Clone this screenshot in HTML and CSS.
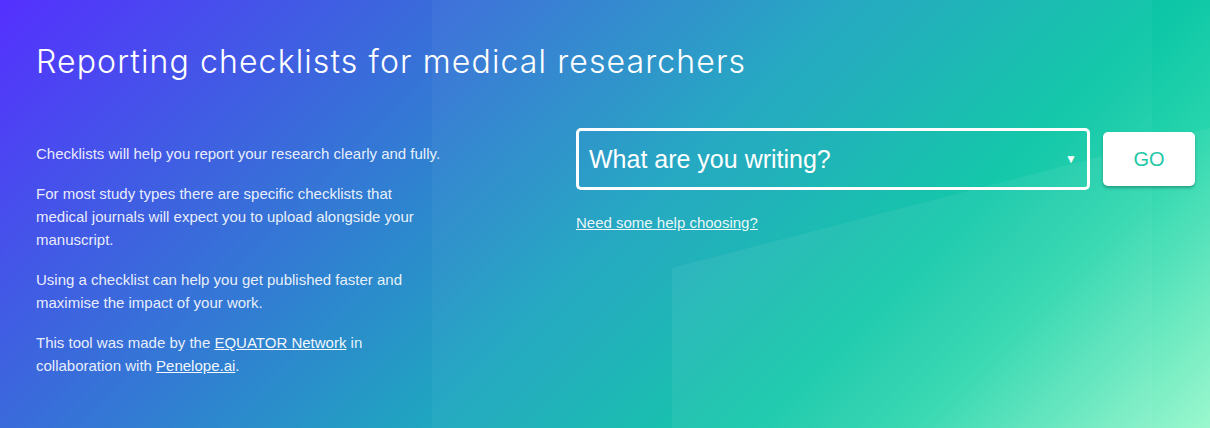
FILE: index.html
```html
<!DOCTYPE html>
<html lang="en">
<head>
<meta charset="utf-8">
<title>Reporting checklists for medical researchers</title>
<link rel="stylesheet" href="styles.css">
</head>
<body>
<section class="hero">
  <svg class="hero-shapes" width="1210" height="428" viewBox="0 0 1210 428" aria-hidden="true">
    <rect x="432" y="0" width="720" height="428" fill="#ffffff" fill-opacity="0.035"/>
    <polygon points="672,268 1210,128 1210,428 672,428" fill="#ffffff" fill-opacity="0.06"/>
  </svg>
  <div class="hero-inner">
    <h1 class="hero-title">Reporting checklists for medical researchers</h1>
    <div class="hero-body">
      <div class="intro">
        <p>Checklists will help you report your research clearly and fully.</p>
        <p>For most study types there are specific checklists that medical journals will expect you to upload alongside your manuscript.</p>
        <p>Using a checklist can help you get published faster and maximise the impact of your work.</p>
        <p>This tool was made by the <a href="#">EQUATOR Network</a> in collaboration with <a href="#">Penelope.ai</a>.</p>
      </div>
      <div class="picker">
        <div class="picker-row">
          <div class="select">
            <span class="select-label">What are you writing?</span>
            <span class="select-arrow">&#9660;</span>
          </div>
          <button class="go-btn" type="button">GO</button>
        </div>
        <a class="help-link" href="#">Need some help choosing?</a>
      </div>
    </div>
  </div>
</section>
</body>
</html>
```
FILE: styles.css
```css
* { box-sizing: border-box; }
html, body { margin: 0; padding: 0; }
body {
  width: 1210px;
  height: 428px;
  overflow: hidden;
  font-family: "Liberation Sans", Arial, sans-serif;
}
.hero {
  position: relative;
  width: 1210px;
  height: 428px;
  overflow: hidden;
  background: linear-gradient(135deg, #5530ff 0%, #3a6adb 26%, #1fa6c0 52%, #0cc6a6 72%, #28d6ad 82%, #96f8cb 100%);
}
.hero-shapes {
  position: absolute;
  left: 0;
  top: 0;
  z-index: 0;
}
.hero-inner {
  position: relative;
  z-index: 1;
  padding: 39px 15px 0 36px;
}
.hero-title {
  margin: 0;
  font-family: Inter, "Open Sans", sans-serif;
  font-weight: 300;
  font-size: 32px;
  line-height: 46px;
  color: #ffffff;
  letter-spacing: 1.12px;
}
.hero-body {
  display: flex;
  gap: 132px;
  margin-top: 43px;
}
.intro {
  width: 408px;
  padding-top: 14px;
}
.intro p {
  margin: 0 0 17px;
  font-size: 15px;
  line-height: 23px;
  color: rgba(255, 255, 255, 0.9);
}
.intro a {
  color: rgba(255, 255, 255, 0.95);
  text-decoration: underline;
}
.picker {
  display: flex;
  flex-direction: column;
  width: 619px;
}
.picker-row {
  display: flex;
  align-items: center;
  gap: 13px;
}
.select {
  width: 514px;
  height: 62px;
  border: 3px solid #ffffff;
  border-radius: 5px;
  display: flex;
  align-items: center;
  justify-content: space-between;
  padding: 0 10px 0 10px;
  color: #ffffff;
}
.select-label {
  font-size: 25px;
  line-height: 30px;
}
.select-arrow {
  font-size: 12px;
  line-height: 12px;
}
.go-btn {
  width: 92px;
  height: 54px;
  border: none;
  border-radius: 5px;
  background: #ffffff;
  color: #1ec7a6;
  font-family: "Liberation Sans", Arial, sans-serif;
  font-size: 20px;
  box-shadow: 0 2px 3px rgba(0, 60, 50, 0.35);
  padding: 0;
}
.help-link {
  align-self: flex-start;
  margin-top: 23px;
  font-size: 15px;
  line-height: 20px;
  color: rgba(255, 255, 255, 0.92);
  text-decoration: underline;
}
```
